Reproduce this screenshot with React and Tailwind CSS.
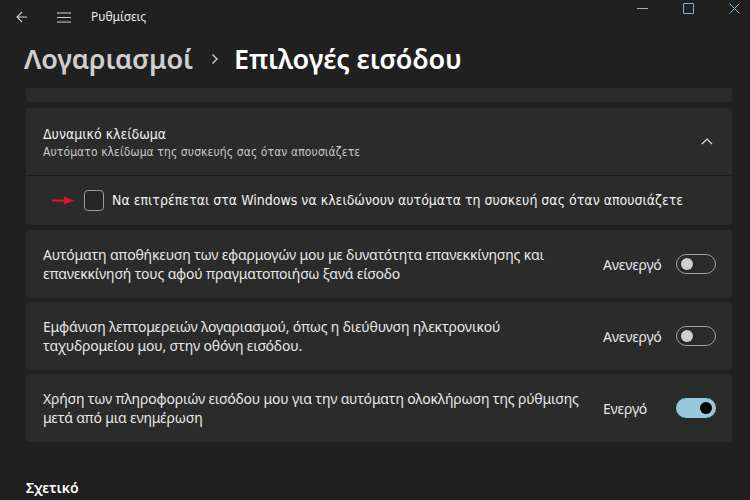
import React from 'react';

const font = { fontFamily: '"Noto Sans", "Open Sans", sans-serif' };
const condensed = { fontFamily: '"DejaVu Sans Condensed", "Noto Sans", sans-serif' };

function Toggle({ on }) {
  if (on) {
    return (
      <div className="w-[40px] h-[20px] rounded-full bg-[#98c8db] flex items-center justify-end pr-[4px]">
        <div className="w-[12px] h-[12px] rounded-full bg-black" />
      </div>
    );
  }
  return (
    <div className="w-[40px] h-[20px] rounded-full border border-[#a0a0a0] flex items-center pl-[4px]">
      <div className="w-[12px] h-[12px] rounded-full bg-[#d0d0d0]" />
    </div>
  );
}

function SettingRow({ lines, label, on }) {
  return (
    <div className="h-[68px] bg-[#2b2b2b] rounded-[4px] flex items-center pl-[17px] pr-[16px]">
      <div className="flex-1 text-[14px] leading-[19px] text-[#e6e6e6] tracking-[-0.17px]">
        {lines.map((l) => (
          <div key={l}>{l}</div>
        ))}
      </div>
      <span className="w-[73px] text-[14px] text-[#e6e6e6] tracking-[-0.2px]">{label}</span>
      <Toggle on={on} />
    </div>
  );
}

export default function App() {
  return (
    <div className="w-[750px] h-[500px] bg-[#202020] overflow-hidden flex flex-col" style={font}>
      {/* title bar */}
      <div className="h-[34px] flex items-center relative shrink-0">
        <svg className="ml-[16px]" width="12" height="12" viewBox="0 0 12 12" fill="none" stroke="#cfcfcf" strokeWidth="1.1">
          <path d="M11 6H1M6 1L1 6l5 5" />
        </svg>
        <svg className="ml-[29px]" width="14" height="11" viewBox="0 0 14 11" fill="none" stroke="#cfcfcf" strokeWidth="1.1">
          <path d="M0 1h14M0 5.5h14M0 10h14" />
        </svg>
        <span className="ml-[20px] text-[12px] text-[#e8e8e8]">Ρυθμίσεις</span>
        <div className="absolute top-0 right-0 flex">
          <svg className="absolute left-[-113px] top-[8px]" width="11" height="1" viewBox="0 0 11 1">
            <path d="M0 0.5h11" stroke="#8db4cc" strokeWidth="1" />
          </svg>
          <svg className="absolute left-[-67px] top-[3px]" width="11" height="11" viewBox="0 0 11 11" fill="none">
            <rect x="0.5" y="0.5" width="10" height="10" rx="0.5" stroke="#8db4cc" />
          </svg>
          <svg className="absolute left-[-21px] top-[3px]" width="11" height="11" viewBox="0 0 11 11" fill="none">
            <path d="M0.5 0.5l10 10M10.5 0.5l-10 10" stroke="#8db4cc" />
          </svg>
        </div>
      </div>

      {/* heading */}
      <div className="h-[54px] shrink-0 flex items-center pl-[24px] pb-[4px]">
        <span className="text-[27px] font-semibold text-[#cfcfcf] tracking-[-0.1px]">Λογαριασμοί</span>
        <svg className="ml-[18px] mr-[15px]" width="8" height="12" viewBox="0 0 8 12" fill="none" stroke="#d0d0d0" strokeWidth="1.4">
          <path d="M1.5 1.5L6 6l-4.5 4.5" />
        </svg>
        <span className="text-[27px] font-semibold text-white tracking-[-0.1px]">Επιλογές εισόδου</span>
      </div>

      {/* content */}
      <div className="flex flex-col pl-[26px] pr-[18px]">
        <div className="h-[14px] bg-[#2b2b2b] rounded-b-[4px]" />

        <div className="mt-[6px] bg-[#2b2b2b] rounded-[4px] flex flex-col">
          <div className="h-[68px] flex items-center pl-[17px] pr-[19px] border-b border-[#1d1d1d]">
            <div className="flex-1 pt-[2px]" style={condensed}>
              <div className="text-[14px] leading-[18px] text-[#f0f0f0]">Δυναμικό κλείδωμα</div>
              <div className="text-[12px] leading-[18px] text-[#c8c8c8] tracking-[0.1px]">Αυτόματο κλείδωμα της συσκευής σας όταν απουσιάζετε</div>
            </div>
            <svg width="12" height="7" viewBox="0 0 12 7" fill="none" stroke="#e0e0e0" strokeWidth="1.2">
              <path d="M1 6l5-5 5 5" />
            </svg>
          </div>
          <div className="h-[49px] flex items-center pl-[26px]">
            <svg width="22" height="9" viewBox="0 0 22 9">
              <path d="M0 3.6h12V0.5L22 4.5l-10 4V5.4H0z" fill="#e81123" />
            </svg>
            <div className="ml-[10px] w-[20px] h-[21px] rounded-[4px] border border-[#9a9a9a] bg-[#262626]" />
            <span className="ml-[8px] text-[14px] text-[#f0f0f0]" style={condensed}>
              Να επιτρέπεται στα Windows να κλειδώνουν αυτόματα τη συσκευή σας όταν απουσιάζετε
            </span>
          </div>
        </div>

        <div className="mt-[5px] flex flex-col gap-[4px]">
          <SettingRow
            lines={[
              'Αυτόματη αποθήκευση των εφαρμογών μου με δυνατότητα επανεκκίνησης και',
              'επανεκκίνησή τους αφού πραγματοποιήσω ξανά είσοδο',
            ]}
            label="Ανενεργό"
          />
          <SettingRow
            lines={[
              'Εμφάνιση λεπτομερειών λογαριασμού, όπως η διεύθυνση ηλεκτρονικού',
              'ταχυδρομείου μου, στην οθόνη εισόδου.',
            ]}
            label="Ανενεργό"
          />
          <SettingRow
            lines={[
              'Χρήση των πληροφοριών εισόδου μου για την αυτόματη ολοκλήρωση της ρύθμισης',
              'μετά από μια ενημέρωση',
            ]}
            label="Ενεργό"
            on
          />
        </div>

        <div className="mt-[35px] text-[14px] font-semibold text-white">Σχετικό</div>
      </div>
    </div>
  );
}
